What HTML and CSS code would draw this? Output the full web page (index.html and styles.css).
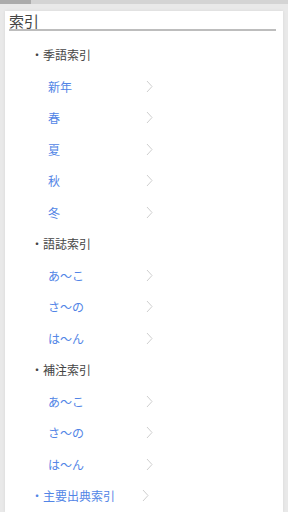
FILE: index.html
```html
<!DOCTYPE html>
<html lang="ja">
<head>
    <meta charset="UTF-8">
    <meta name="viewport" content="width=device-width, initial-scale=1.0">
    <title>索引</title>
    <link rel="stylesheet" href="styles.css">
</head>
<body>
    <!-- Top Bar -->
    <div class="topbar"><div class="tab"></div></div>

    <!-- Index Card -->
    <div class="card">
        <h1 class="title">索引</h1>

        <ul class="index">
            <li class="head">・季語索引</li>
            <li class="item"><span>新年</span><svg class="chev" viewBox="0 0 7 13"><polyline points="1,1 6,6.5 1,12"/></svg></li>
            <li class="item"><span>春</span><svg class="chev" viewBox="0 0 7 13"><polyline points="1,1 6,6.5 1,12"/></svg></li>
            <li class="item"><span>夏</span><svg class="chev" viewBox="0 0 7 13"><polyline points="1,1 6,6.5 1,12"/></svg></li>
            <li class="item"><span>秋</span><svg class="chev" viewBox="0 0 7 13"><polyline points="1,1 6,6.5 1,12"/></svg></li>
            <li class="item"><span>冬</span><svg class="chev" viewBox="0 0 7 13"><polyline points="1,1 6,6.5 1,12"/></svg></li>

            <li class="head">・語誌索引</li>
            <li class="item"><span>あ～こ</span><svg class="chev" viewBox="0 0 7 13"><polyline points="1,1 6,6.5 1,12"/></svg></li>
            <li class="item"><span>さ～の</span><svg class="chev" viewBox="0 0 7 13"><polyline points="1,1 6,6.5 1,12"/></svg></li>
            <li class="item"><span>は～ん</span><svg class="chev" viewBox="0 0 7 13"><polyline points="1,1 6,6.5 1,12"/></svg></li>

            <li class="head">・補注索引</li>
            <li class="item"><span>あ～こ</span><svg class="chev" viewBox="0 0 7 13"><polyline points="1,1 6,6.5 1,12"/></svg></li>
            <li class="item"><span>さ～の</span><svg class="chev" viewBox="0 0 7 13"><polyline points="1,1 6,6.5 1,12"/></svg></li>
            <li class="item"><span>は～ん</span><svg class="chev" viewBox="0 0 7 13"><polyline points="1,1 6,6.5 1,12"/></svg></li>

            <li class="head link"><span>・主要出典索引</span><svg class="chev" viewBox="0 0 7 13"><polyline points="1,1 6,6.5 1,12"/></svg></li>
        </ul>
    </div>

    <div class="bottombar"></div>
</body>
</html>
```

FILE: styles.css
```css
body {
    margin: 0;
    font-family: 'Noto Sans CJK JP', 'DejaVu Sans', sans-serif;
    background-color: #e9e9e9;
    height: 512px;
    display: flex;
    flex-direction: column;
    overflow: hidden;
}

/* Top Bar */
.topbar {
    height: 4px;
    background: #d4d4d4;
    margin-bottom: 7px;
}

.topbar .tab {
    width: 31px;
    height: 4px;
    background: #ababab;
}

/* Index Card */
.card {
    flex: 1;
    margin: 0 5px;
    background: #fff;
    box-shadow: 0 0 3px rgba(0, 0, 0, 0.08);
    padding: 1px 7px 0 4px;
}

.title {
    margin: 0;
    font-size: 15px;
    font-weight: normal;
    line-height: 17px;
    color: #444;
    border-bottom: 2px solid #bdbdbd;
}

.index {
    list-style: none;
    margin: 8px 0 0;
    padding: 0;
}

.index li {
    height: 31.5px;
    display: flex;
    align-items: center;
    font-size: 12px;
}

.head {
    padding-left: 22px;
    color: #444;
}

.item {
    padding-left: 39px;
    width: 108px;
    justify-content: space-between;
    color: #5285e6;
}

.head.link {
    color: #5285e6;
    width: 121px;
    justify-content: space-between;
}

/* Chevron */
.chev {
    width: 7px;
    height: 13px;
    margin-right: 3px;
    fill: none;
    stroke: #cfcfcf;
    stroke-width: 1;
}

.bottombar {
    height: 4px;
    background: #dcdcdc;
}
```
